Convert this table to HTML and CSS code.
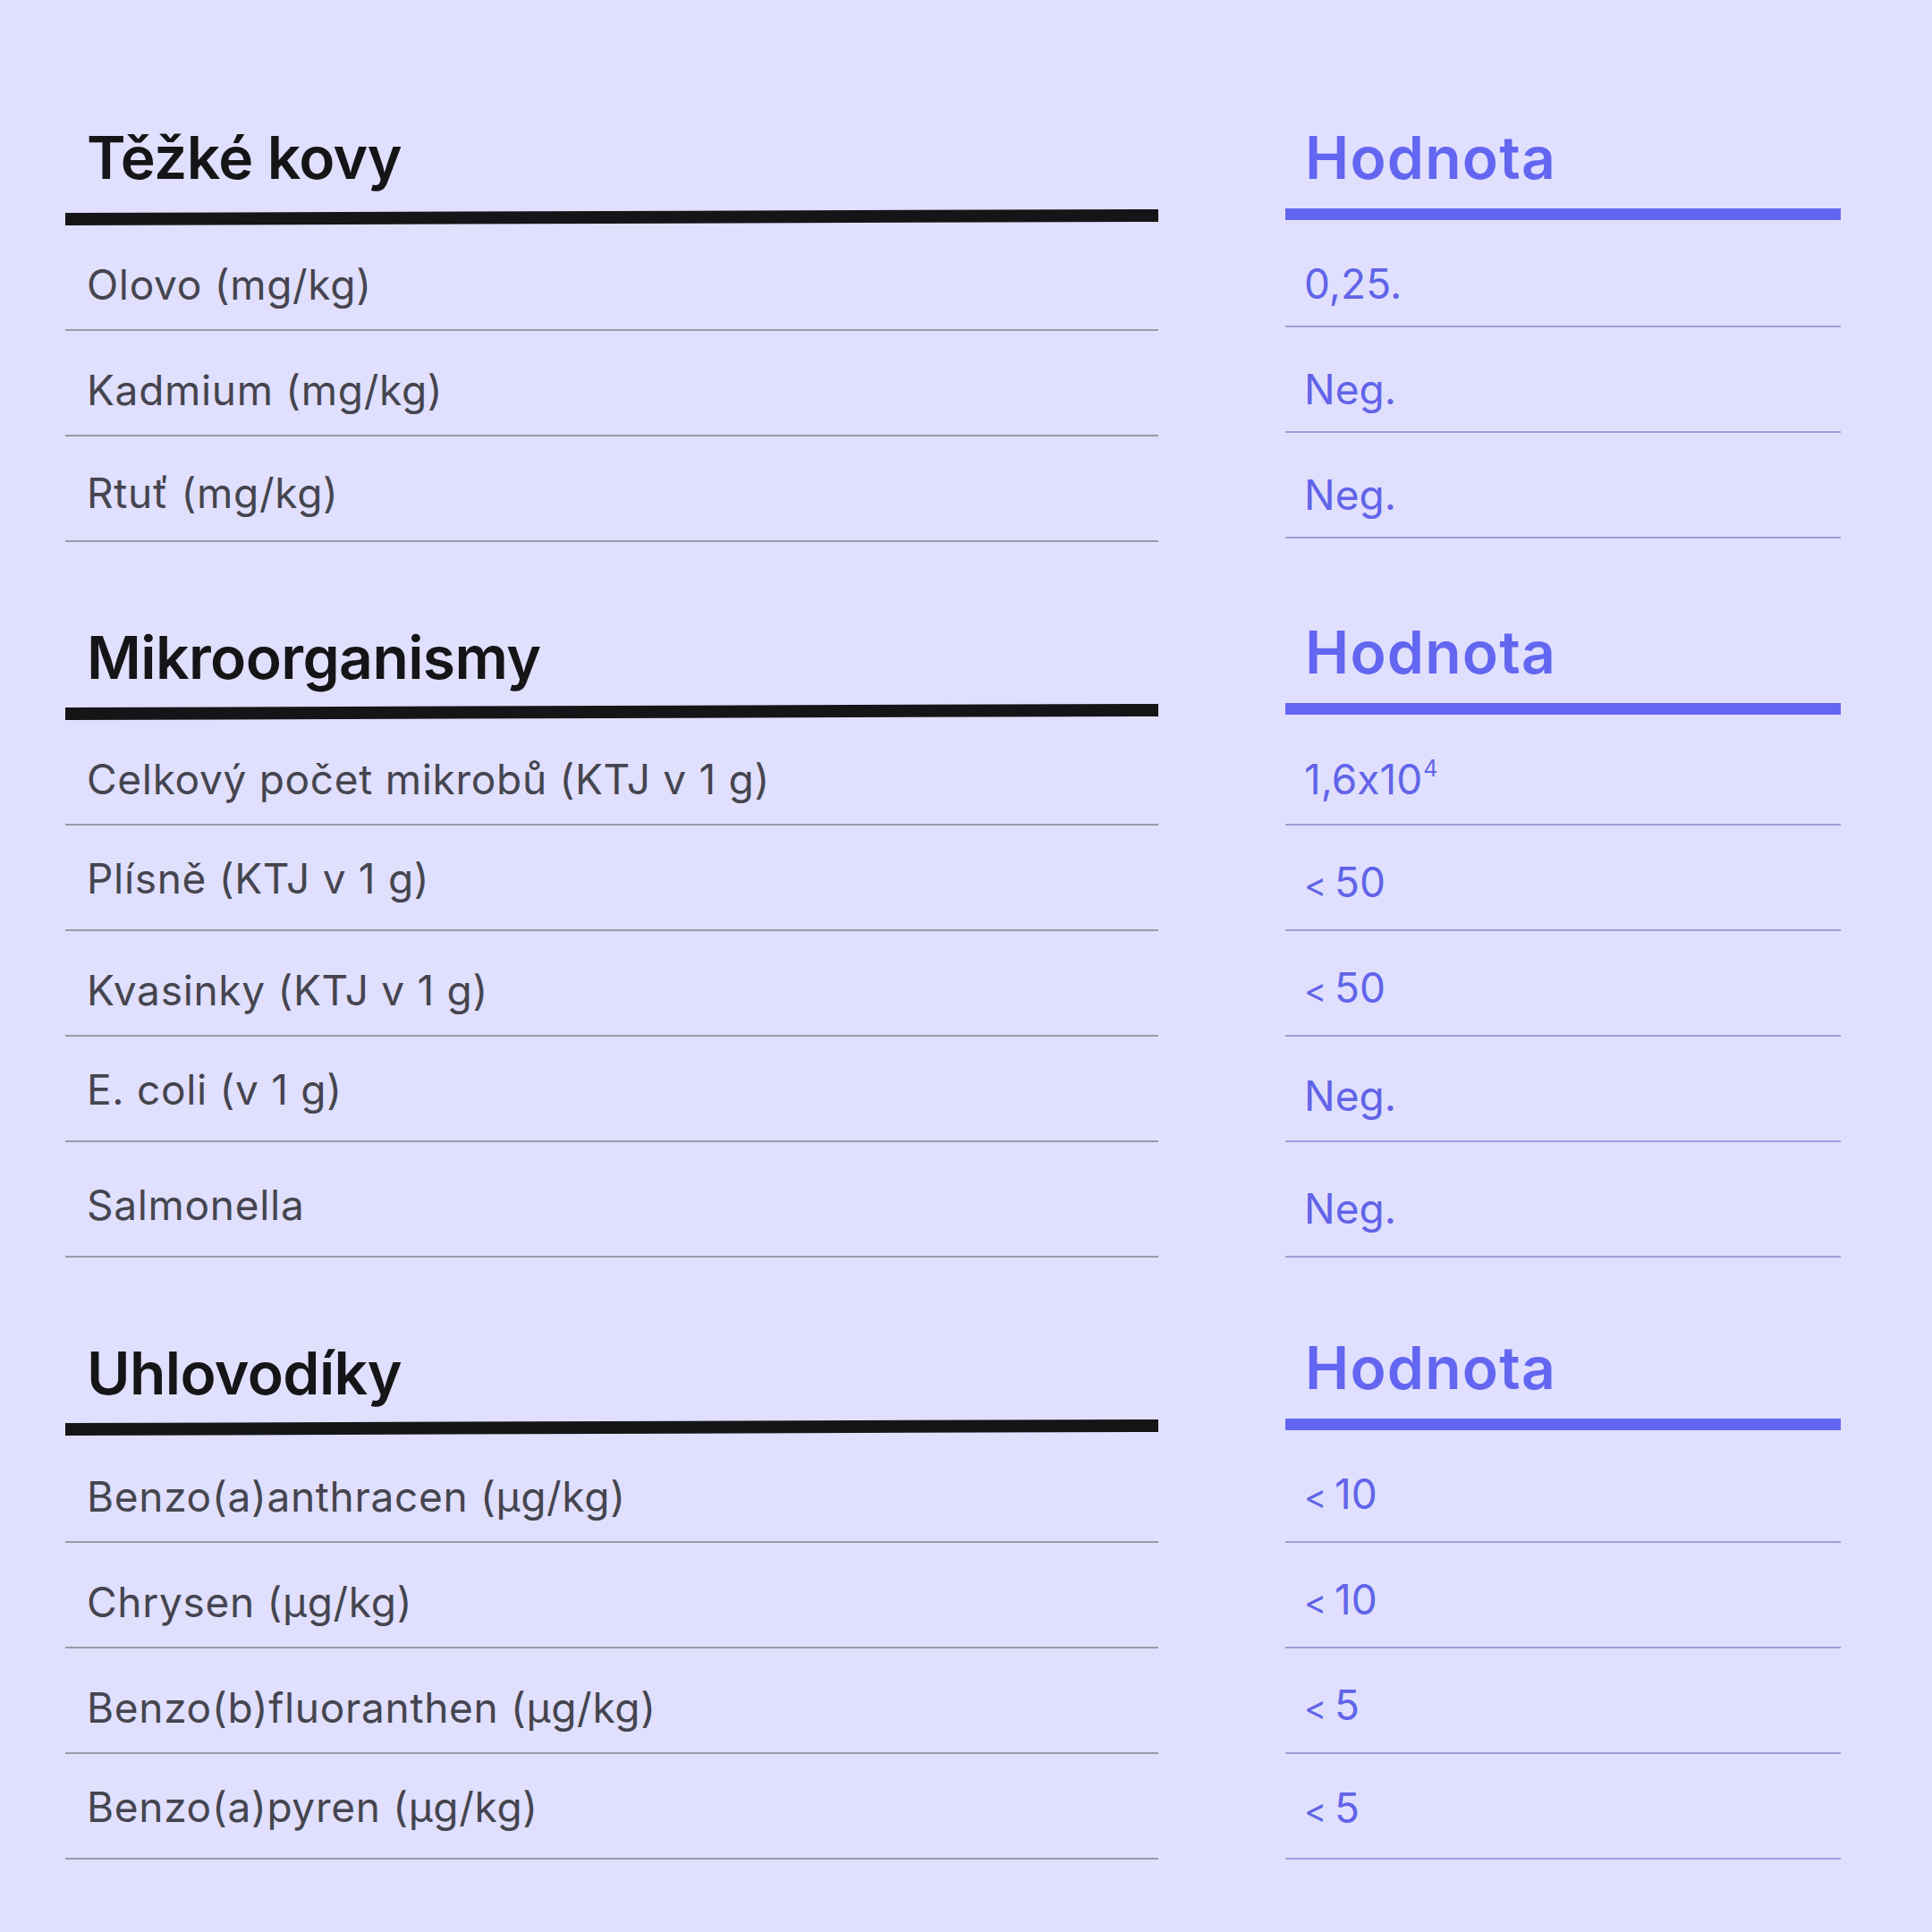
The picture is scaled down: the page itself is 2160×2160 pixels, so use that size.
FILE: index.html
```html
<!DOCTYPE html>
<html lang="cs">
<head>
<meta charset="utf-8">
<title>Rozbor</title>
<link rel="stylesheet" href="styles.css">
</head>
<body>
<main class="page">
  <section class="sec sec--first">
    <div class="col col--name">
      <div class="head"><h2 class="title">Těžké kovy</h2></div>
      <div class="bar bar--dark"></div>
      <div class="row"><span class="cell">Olovo (mg/kg)</span></div>
      <div class="row"><span class="cell">Kadmium (mg/kg)</span></div>
      <div class="row row--mid"><span class="cell">Rtuť (mg/kg)</span></div>
    </div>
    <div class="col col--value">
      <div class="head"><h2 class="title title--accent">Hodnota</h2></div>
      <div class="bar bar--accent"></div>
      <div class="row row--value row--high row--short"><span class="cell">0,25.</span></div>
      <div class="row row--value row--high"><span class="cell">Neg.</span></div>
      <div class="row row--value row--high"><span class="cell">Neg.</span></div>
    </div>
  </section>

  <section class="sec">
    <div class="col col--name">
      <div class="head"><h2 class="title">Mikroorganismy</h2></div>
      <div class="bar bar--dark"></div>
      <div class="row"><span class="cell">Celkový počet mikrobů (KTJ v 1 g)</span></div>
      <div class="row row--low"><span class="cell">Plísně (KTJ v 1 g)</span></div>
      <div class="row"><span class="cell">Kvasinky (KTJ v 1 g)</span></div>
      <div class="row row--low"><span class="cell">E. coli (v 1 g)</span></div>
      <div class="row row--low row--big"><span class="cell">Salmonella</span></div>
    </div>
    <div class="col col--value">
      <div class="head"><h2 class="title title--accent">Hodnota</h2></div>
      <div class="bar bar--accent"></div>
      <div class="row row--value"><span class="cell">1,6x10<sup class="exp">4</sup></span></div>
      <div class="row row--value"><span class="cell"><span class="lt">&lt;</span> 50</span></div>
      <div class="row row--value"><span class="cell"><span class="lt">&lt;</span> 50</span></div>
      <div class="row row--value"><span class="cell">Neg.</span></div>
      <div class="row row--value row--mid row--big"><span class="cell">Neg.</span></div>
    </div>
  </section>

  <section class="sec sec--last">
    <div class="col col--name">
      <div class="head"><h2 class="title">Uhlovodíky</h2></div>
      <div class="bar bar--dark"></div>
      <div class="row row--lead"><span class="cell">Benzo(a)anthracen (µg/kg)</span></div>
      <div class="row"><span class="cell">Chrysen (µg/kg)</span></div>
      <div class="row"><span class="cell">Benzo(b)fluoranthen (µg/kg)</span></div>
      <div class="row row--low"><span class="cell">Benzo(a)pyren (µg/kg)</span></div>
    </div>
    <div class="col col--value">
      <div class="head"><h2 class="title title--accent">Hodnota</h2></div>
      <div class="bar bar--accent"></div>
      <div class="row row--value row--lead"><span class="cell"><span class="lt">&lt;</span> 10</span></div>
      <div class="row row--value"><span class="cell"><span class="lt">&lt;</span> 10</span></div>
      <div class="row row--value"><span class="cell"><span class="lt">&lt;</span> 5</span></div>
      <div class="row row--value row--mid"><span class="cell"><span class="lt">&lt;</span> 5</span></div>
    </div>
  </section>
</main>
</body>
</html>
```

FILE: styles.css
```css
html, body {
  margin: 0;
  padding: 0;
  background: #e0dffd;
}

body {
  width: 2160px;
  min-height: 2160px;
  font-family: Inter, "Noto Sans", "Liberation Sans", sans-serif;
  font-feature-settings: "calt" 0;
}

.page {
  padding: 53px 0 0 73px;
}

.sec {
  display: flex;
  gap: 142px;
}

.col {
  display: flex;
  flex-direction: column;
}

.col--name {
  width: 1222px;
}

.col--value {
  width: 621px;
}

.head {
  height: 185px;
  box-sizing: border-box;
  display: flex;
  align-items: flex-end;
  padding: 0 24px 23px;
}

.sec--first .col--name .head {
  padding-bottom: 29px;
}

.col--value .head {
  padding: 0 22px 29px;
}

.title {
  margin: 0;
  font-size: 66px;
  line-height: 66px;
  font-weight: 600;
  color: #151518;
  letter-spacing: -0.6px;
}

.title--accent {
  color: #6366f1;
  letter-spacing: 1.2px;
}

.bar {
  flex: none;
}

.bar--dark {
  height: 14px;
  background: #151518;
  transform-origin: left center;
  transform: rotate(-0.19deg);
}

.bar--accent {
  height: 13px;
  margin-top: -5px;
  margin-bottom: 6px;
  background: #6366f1;
}

.row {
  height: 118px;
  box-sizing: border-box;
  display: flex;
  align-items: flex-end;
  padding: 0 24px 27px;
  border-bottom: 2px solid #9a9aa8;
  flex: none;
}

.row--value {
  border-bottom-color: #9c9ed8;
  padding-left: 21px;
}

.row--high { padding-bottom: 24px; }
.row--mid { padding-bottom: 30px; }
.row--low { padding-bottom: 34px; }

.row--short { height: 114px; }
.row--lead { height: 120px; }
.row--big { height: 129px; }

.cell {
  font-size: 46px;
  line-height: 46px;
  font-weight: 400;
  color: #45454f;
  white-space: nowrap;
  letter-spacing: 0.7px;
}

.row--value .cell {
  color: #6164e8;
  letter-spacing: 0;
  word-spacing: -4px;
}

.lt {
  font-size: 38px;
}

.exp {
  font-size: 25px;
  line-height: 0;
  vertical-align: 20px;
  margin-left: 1px;
}
```
